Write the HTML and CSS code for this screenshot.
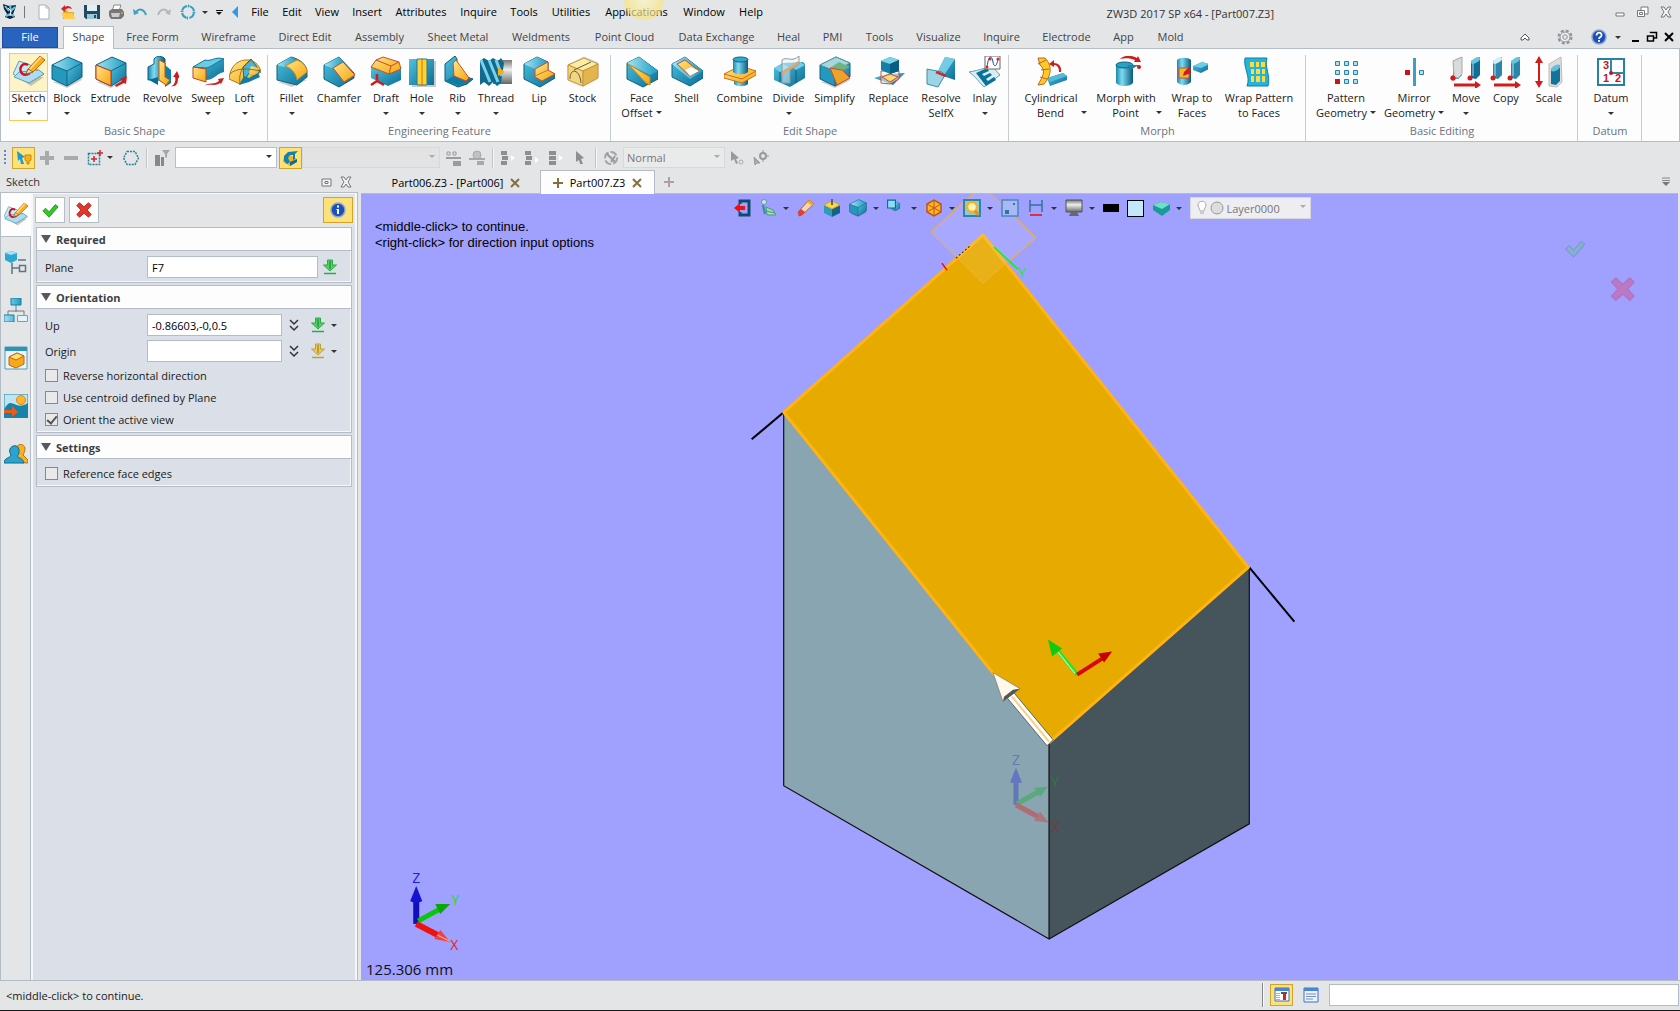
FILE: index.html
```html
<!DOCTYPE html>
<html lang="en">
<head>
<meta charset="utf-8">
<title>ZW3D 2017 SP x64 - [Part007.Z3]</title>
<link rel="stylesheet" href="styles.css">
</head>
<body>
<svg class="defs" aria-hidden="true">
  <defs>
    <linearGradient id="gb" x1="0" y1="0" x2="1" y2="1"><stop offset="0" stop-color="#4fc3e0"/><stop offset="1" stop-color="#0b6c94"/></linearGradient>
    <linearGradient id="gc" x1="0" y1="0" x2="1" y2="0"><stop offset="0" stop-color="#1a86ab"/><stop offset=".35" stop-color="#7fdcf0"/><stop offset="1" stop-color="#075a80"/></linearGradient>
    <linearGradient id="gt" x1="0" y1="0" x2="1" y2="0"><stop offset="0" stop-color="#a6e3f2"/><stop offset="1" stop-color="#1d9cc2"/></linearGradient>
    <linearGradient id="gy" x1="0" y1="0" x2="1" y2="1"><stop offset="0" stop-color="#ffe58a"/><stop offset="1" stop-color="#f5a50a"/></linearGradient>
    <linearGradient id="gg" x1="0" y1="0" x2="0" y2="1"><stop offset="0" stop-color="#777"/><stop offset=".4" stop-color="#eee"/><stop offset="1" stop-color="#666"/></linearGradient>
  </defs>
  <symbol id="box" viewBox="0 0 32 32"><path d="M2 26l14 6 15-8-2-3z" fill="#0003"/><path d="M1 9L17 1l14 6-15 8z" fill="url(#gt)"/><path d="M1 9l15 6v15L1 23z" fill="#2499bd"/><path d="M16 15l15-8v14l-15 9z" fill="url(#gb)"/><path d="M1 9l15 6 15-8M16 15v15M1 9L17 1l14 6v14l-15 9-15-7z" fill="none" stroke="#0b6283"/></symbol>
  <symbol id="sketch" viewBox="0 0 32 32"><path d="M4 21l14 9 13-9z" fill="#0003"/><path d="M0 18L6 5l11 4 14 9-15 9z" fill="#cdeaf6" stroke="#5c9fbc"/><path d="M1 21l5-5 20-2 5 4-15 9z" fill="#aedbef" stroke="#5c9fbc"/><path d="M15 9c-5-3-9 2-7 7 2 4 6 3 9 1" fill="none" stroke="#c91522" stroke-width="2.500"/><path d="M13 18l2-5L27 0l5 4-12 12z" fill="#f9ad1c" stroke="#c46f08"/><path d="M17 13L28 1" stroke="#ffe08a" stroke-width="1.500"/><path d="M13 18l2-5 5 3z" fill="#f4d7a6" stroke="#555" stroke-width=".7"/></symbol>
  <symbol id="dn" viewBox="0 0 16 16"><path d="M5.500 1h5v5h4L8 12 1.500 6h4z" stroke-width="1"/><path d="M8 2v8" stroke-width="2"/><path d="M2 14.500h12" stroke-width="1.500"/></symbol>
  <symbol id="tick" viewBox="0 0 20 20"><path d="M2 11l3-3 4 4 7-8 3 2.500L9 18z"/></symbol>
  <symbol id="cross" viewBox="0 0 20 20"><path d="M2 5l3-3 5 4.500L15 2l3 3-4.500 5 4.500 5-3 3-5-4.500L5 18l-3-3 4.500-5z"/></symbol>
  <symbol id="chev" viewBox="0 0 12 14"><path d="M2 2l4 4 4-4M2 8l4 4 4-4" fill="none" stroke="#333" stroke-width="1.500"/></symbol>
  <symbol id="x" viewBox="0 0 12 12"><path d="M2 2l8 8M10 2l-8 8" fill="none" stroke="#84703f" stroke-width="2"/></symbol>
  <symbol id="xo" viewBox="0 0 12 12"><path d="M1 1h3l2 3 2-3h3L8 6l3 5H8L6 8l-2 3H1l3-5z" fill="#f4f4f4" stroke="#777"/></symbol>
  <symbol id="move" viewBox="0 0 32 32"><path d="M3 5l9-4v18l-4 4-5-1zM21 5l9-4v18l-4 4-5-1z"/><path d="M5 7v13M23 7v13" stroke="#fff" stroke-opacity=".35" stroke-width="2"/><ellipse cx="7.500" cy="4.500" rx="5" ry="2.400" transform="rotate(-30 7.500 4.500)" fill="#cfeef7"/><ellipse cx="25.500" cy="4.500" rx="5" ry="2.400" transform="rotate(-30 25.500 4.500)" fill="#68c5df"/><circle cx="3" cy="22" r="2.500" fill="#d01c1c"/><circle cx="20" cy="22" r="2.500" fill="#d01c1c"/><path d="M4 27.500h21v-2.500l6 4-6 4v-2.500H4z" fill="#d01c1c"/></symbol>
</svg>

<div class="app">
  <header class="titlebar">
    <div class="quick">
      <svg class="logo" viewBox="0 0 16 18"><path d="M1 1l6 2 7-1-1 4-2 5 2 3-5 2-5-2 2-3-3-5z" fill="#123"/><path d="M3 3l4 5M8 2l1 6 4-4M4 13l4-2 4 2" stroke="#69c6e8" stroke-width="2" fill="none"/><path d="M6 5l3 3-1 5" stroke="#fff" fill="none"/></svg>
      <i class="vsep"></i>
      <button aria-label="New"><svg viewBox="0 0 16 16"><path d="M3 1h7l3 3v11H3z" fill="#fff" stroke="#a9b0b8"/><path d="M10 1v3h3" fill="none" stroke="#a9b0b8"/></svg></button>
      <button aria-label="Open"><svg viewBox="0 0 16 16"><path d="M3 6h4l1 2h6v7H3z" fill="#f6a61a"/><path d="M1 9h12l2 6H4z" fill="#ffcc4d"/><path d="M12 5C11 2 7 1 5 3V1L1 5l4 3V6c2-2 4-2 7-1z" fill="#d3222a"/></svg></button>
      <button aria-label="Save"><svg viewBox="0 0 16 16"><path d="M0 1h16v14H2l-2-2z" fill="#254a5f"/><path d="M3 1h10v6H3z" fill="#dff1f8"/><path d="M3 10h10v5H3z" fill="#9dc6d8"/><path d="M10 11h2v3h-2z" fill="#254a5f"/></svg></button>
      <button aria-label="Print"><svg viewBox="0 0 16 16"><path d="M6 1h7l-2 6H4z" fill="#fff" stroke="#888"/><path d="M1 7l3-2h10l2 3v4l-3 3H3l-2-3z" fill="#777"/><path d="M3 9h9l-1 4H4z" fill="#ccc"/><circle cx="14" cy="9" r="1" fill="#d8a322"/></svg></button>
      <button aria-label="Undo"><svg viewBox="0 0 16 16"><path d="M4 8c3-4 8-3 10 3" fill="none" stroke="#3fa0bf" stroke-width="2"/><path d="M1 5l1 6 5-2z" fill="#3fa0bf"/></svg></button>
      <button aria-label="Redo"><svg viewBox="0 0 16 16"><path d="M12 8c-3-4-8-3-10 3" fill="none" stroke="#b3b8bd" stroke-width="2"/><path d="M15 5l-1 6-5-2z" fill="#b3b8bd"/></svg></button>
      <button aria-label="Regenerate"><svg viewBox="0 0 16 16"><circle cx="8" cy="8" r="6" fill="none" stroke="#3d9fc0" stroke-width="2" stroke-dasharray="6.400 3" stroke-dashoffset="-1.500"/><path d="M8 0l2 2-2 2zM16 8l-2 2-2-2zM8 16l-2-2 2-2zM0 8l2-2 2 2z" fill="#3d9fc0"/></svg></button>
      <i class="dd"></i><button class="more" aria-label="Customize"><i class="bar"></i><i class="dd"></i></button>
      <i class="left"></i>
    </div>
    <nav class="menu">
      <a href="#">File</a><a href="#">Edit</a><a href="#">View</a><a href="#">Insert</a><a href="#">Attributes</a><a href="#">Inquire</a><a href="#">Tools</a><a href="#">Utilities</a><a href="#" class="spot">Applications</a><a href="#">Window</a><a href="#">Help</a>
    </nav>
    <h1>ZW3D 2017 SP x64 - [Part007.Z3]</h1>
    <div class="wbtns">
      <button aria-label="Minimize"><svg viewBox="0 0 12 12"><path d="M2 7h8v3H2z" fill="#fff" stroke="#777"/></svg></button>
      <button aria-label="Restore"><svg viewBox="0 0 12 12"><path d="M4 1h7v7H4z" fill="#fff" stroke="#777"/><path d="M.500 4.500h7v6h-7zM2.500 6.500h3v2h-3z" fill="#fff" stroke="#777"/></svg></button>
      <button aria-label="Close"><svg viewBox="0 0 12 12"><use href="#xo"/></svg></button>
    </div>
  </header>

  <div class="tabrow">
    <nav class="tabs">
      <a href="#" class="file">File</a><a href="#" class="on">Shape</a><a href="#">Free Form</a><a href="#">Wireframe</a><a href="#">Direct Edit</a><a href="#">Assembly</a><a href="#">Sheet Metal</a><a href="#">Weldments</a><a href="#">Point Cloud</a><a href="#">Data Exchange</a><a href="#">Heal</a><a href="#">PMI</a><a href="#">Tools</a><a href="#">Visualize</a><a href="#">Inquire</a><a href="#">Electrode</a><a href="#">App</a><a href="#">Mold</a>
    </nav>
    <div class="tools">
      <button class="fold" aria-label="Collapse ribbon"><svg viewBox="0 0 12 12"><path d="M2 7l4-4 4 4v2H8L6 7 4 9H2z" fill="#fff" stroke="#555"/></svg></button>
      <button class="gearb" aria-label="Options"><svg viewBox="0 0 16 16"><circle cx="8" cy="8" r="6.500" fill="none" stroke="#8e9296" stroke-width="2" stroke-dasharray="3 2.100"/><circle cx="8" cy="8" r="5" fill="#eee" stroke="#8e9296"/><circle cx="8" cy="8" r="2.300" fill="#e3e5e7" stroke="#8e9296"/></svg></button>
      <button aria-label="Help"><svg viewBox="0 0 16 16"><circle cx="8" cy="8" r="7" fill="#1c50b8" stroke="#8fa6cf" stroke-width="1.500"/><path d="M5.500 6.500c0-4 5.500-3.500 5 0-.3 1.500-2.500 1.500-2.500 3.500M8 11v2" stroke="#fff" stroke-width="1.800" fill="none"/></svg></button>
      <i class="dd"></i>
      <button class="sm" aria-label="Minimize document"><svg viewBox="0 0 12 12"><path d="M3 9h7v2H3z"/></svg></button>
      <button class="sm" aria-label="Restore document"><svg viewBox="0 0 12 12"><path d="M4.500 2v-.500h6V7H8M1.500 5h6v5h-6z" fill="none" stroke="#000" stroke-width="1.500"/></svg></button>
      <button class="sm" aria-label="Close document"><svg viewBox="0 0 12 12"><path d="M2 2l8 8M10 2l-8 8" stroke="#000" stroke-width="2"/></svg></button>
    </div>
  </div>

  <div class="ribbon">
    <section class="grp basic"><div class="items">
      <button class="cmd hot"><svg viewBox="0 0 32 32"><use href="#sketch"/></svg><span>Sketch</span><i class="dd"></i></button>
      <button class="cmd"><svg viewBox="0 0 32 32"><use href="#box"/></svg><span>Block</span><i class="dd"></i></button>
      <button class="cmd"><svg viewBox="0 0 32 32"><use href="#box"/><path d="M1 9l15 6v15L1 23z" fill="url(#gy)" stroke="#c6392b"/><path d="M20 29l7-4-2-2 7-3-1 8-2-1-8 4z" fill="#d01c1c"/></svg><span>Extrude</span></button>
      <button class="cmd"><svg viewBox="0 0 32 32"><path d="M1 11l6-3V3c3-4 9-3 11 0v24l-9-4-8 1z" fill="url(#gc)" stroke="#0a6487"/><path d="M18 9l6 5v13l-6 4z" fill="#147da5"/><path d="M12 4l6 3v14l5 3-4 5-7-5z" fill="url(#gy)" stroke="#c05a18"/><path d="M2 24l9-3v8z" fill="#0a6d94"/><path d="M24 30c4-1 5-6 4-9h-2l4-6 3 7h-2c0 6-2 9-7 8z" fill="#d01c1c"/></svg><span>Revolve</span></button>
      <button class="cmd"><svg viewBox="0 0 32 32"><path d="M1 11l12-7c6 2 10-4 19-1v13c-7 1-10 8-18 8z" fill="url(#gb)"/><path d="M1 11l12-7c6 2 10-4 19-1-8 3-12 8-18 9z" fill="#6bcbe3" stroke="#11779b"/><path d="M1 11l13 2v13L1 22z" fill="url(#gy)" stroke="#b94725"/><path d="M12 30c5-4 10-1 15-5l-1-2 6-1-3 6-1-1c-5 4-10 0-16 3z" fill="#d01c1c"/></svg><span>Sweep</span><i class="dd"></i></button>
      <button class="cmd"><svg viewBox="0 0 32 32"><path d="M0 23C1 10 9 3 20 4c7 1 11 7 12 12l-12 8-9 4z" fill="url(#gy)" stroke="#b87613"/><path d="M14 11l8-8 9 12-5 6-6-4-5 8z" fill="#4ab5d2" stroke="#126f91"/><path d="M20 18l2-8 8 2-2 9z" fill="url(#gy)"/><path d="M15 20l5 2 9-5 2 4-11 5-10 3z" fill="#157ba2"/><path d="M11 28C9 12 18 8 22 4M1 18c6-6 17-6 30-3" fill="none" stroke="#805b18" stroke-width=".8"/></svg><span>Loft</span><i class="dd"></i></button>
    </div><h2>Basic Shape</h2></section>

    <section class="grp eng"><div class="items">
      <button class="cmd"><svg viewBox="0 0 32 32"><path d="M2 26l14 5 15-7z" fill="#0003"/><path d="M1 9L15 1c9 2 16 8 16 15v5l-10 8L1 24z" fill="url(#gb)" stroke="#0b6283"/><path d="M1 9L15 1l6 3-13 7z" fill="url(#gt)"/><path d="M9 10l12-6c6 2 10 7 10 12l-10 8C20 17 15 12 9 10z" fill="url(#gy)" stroke="#c78a18"/></svg><span>Fillet</span><i class="dd"></i></button>
      <button class="cmd"><svg viewBox="0 0 32 32"><path d="M1 9l15-8 15 16v5l-15 9-15-8z" fill="url(#gb)" stroke="#0b6283"/><path d="M1 9l15-8 5 5-12 6z" fill="url(#gt)"/><path d="M10 12l10-6 12 13-11 7z" fill="url(#gy)" stroke="#c74c2a"/></svg><span>Chamfer</span></button>
      <button class="cmd"><svg viewBox="0 0 32 32"><path d="M1 11l15 5 15-5v13l-13 6-17-8z" fill="url(#gb)"/><path d="M6 4l7-3 16 5 2 7-12 5L1 11z" fill="url(#gy)" stroke="#c74c2a"/><path d="M6 4l15 6 8-4M21 10l-2 8" fill="none" stroke="#c74c2a"/><path d="M7 18v7l-6 4M7 25l7 4" stroke="#d01c1c" stroke-width="2.500" fill="none"/></svg><span>Draft</span><i class="dd"></i></button>
      <button class="cmd"><svg viewBox="0 0 32 32"><path d="M4 5h26v26H6z" fill="#0003"/><path d="M3 3h25v26H3z" fill="url(#gb)"/><path d="M11 3h10v26H11z" fill="#ffd22e" stroke="#27799a"/><path d="M16 2v28" stroke="#c87714"/></svg><span>Hole</span><i class="dd"></i></button>
      <button class="cmd"><svg viewBox="0 0 32 32"><path d="M3 8l10-8 2 3v15l16 5-6 5-9 3L3 25z" fill="url(#gb)" stroke="#0a5c7e"/><path d="M3 25l12-7 16 5-14 6z" fill="#0e7ba2"/><path d="M11 7l3-3 13 18-3 3-12-5z" fill="url(#gy)" stroke="#c74c2a"/></svg><span>Rib</span><i class="dd"></i></button>
      <button class="cmd"><svg viewBox="0 0 32 32"><path d="M13 4h19v24H13z" fill="url(#gg)"/><path d="M0 5l4-3 5 3 4-3 5 3 3-3 3 5-3 20-4 3-4-4-4 4-5-4-4 3z" fill="#11698f"/><path d="M1 4l9 22M9 4l9 22M16 4l6 16" stroke="#78d1ea" stroke-width="3"/><path d="M18 11l7 5-7 4z" fill="#f9ae18"/></svg><span>Thread</span><i class="dd"></i></button>
      <button class="cmd"><svg viewBox="0 0 32 32"><path d="M1 8l13-7 11 5v9l7 3v4l-15 9-16-8z" fill="url(#gb)" stroke="#095d80"/><path d="M1 8l13-7 11 5-13 7z" fill="url(#gt)"/><path d="M12 13l13-7v8l7 4-13 7-7-4z" fill="url(#gy)" stroke="#d14e25"/><path d="M12 20l13-6" stroke="#c77a17"/></svg><span>Lip</span></button>
      <button class="cmd"><svg viewBox="0 0 32 32"><use href="#box" opacity=".25"/><path d="M1 9l16-7 14 6-15 7z" fill="#ffeca0" stroke="#c4963f"/><path d="M1 9l15 6v15L1 24z" fill="#f3d67c" stroke="#c4963f"/><path d="M16 15l15-7v14l-15 8z" fill="#e3b54e" stroke="#c4963f"/><path d="M3 23c0-12 10-10 11 4M7 14L24 6" fill="none" stroke="#5c5a49"/></svg><span>Stock</span></button>
    </div><h2>Engineering Feature</h2></section>

    <section class="grp edit"><div class="items">
      <button class="cmd"><svg viewBox="0 0 32 32"><path d="M1 7l12-6 19 14v8l-15 8-16-8z" fill="url(#gb)" stroke="#0b6283"/><path d="M1 7l12-6 19 14-8 4z" fill="url(#gt)"/><path d="M2 8l22 13v8l-4-2z" fill="url(#gy)" stroke="#c98a1a"/></svg><span>Face</span><span class="row">Offset<i class="dd"></i></span></button>
      <button class="cmd"><svg viewBox="0 0 32 32"><path d="M1 8l13-7 18 14v7l-13 8-18-9z" fill="url(#gb)" stroke="#0b6283"/><path d="M1 8l13-7 18 14-13 8z" fill="url(#gt)"/><path d="M6 8l8-4 14 11-9 5z" fill="url(#gy)" stroke="#c74c2a"/><path d="M14 14l6-3 8 4-9 5z" fill="#fff"/></svg><span>Shell</span></button>
      <button class="cmd"><svg viewBox="0 0 32 32"><path d="M10 24h14v4c-3 3-11 3-14 0z" fill="url(#gc)"/><path d="M0 18l16-8 16 5v4l-14 8-18-5z" fill="url(#gy)" stroke="#d06a1e"/><path d="M0 18l18 5 14-8" fill="none" stroke="#d06a1e"/><path d="M9 3h15v13c-3 3-12 3-15 0z" fill="url(#gc)"/><ellipse cx="16.500" cy="3.500" rx="7.500" ry="2.500" fill="#31a7c9" stroke="#0b6283"/></svg><span>Combine</span></button>
      <button class="cmd"><svg viewBox="0 0 32 32"><path d="M1 12l9-5 20-1 2 2v14l-15 9-16-7z" fill="url(#gb)"/><path d="M1 12l9-4 6 3-9 5zM19 11l8-5 5 3-9 5z" fill="#74cfe6"/><path d="M7 16v10M23 14v13" stroke="#0a5c7e"/><path d="M9 4c5-4 10 3 17-4v8l-9 6v13H9z" fill="#eaf1f4" fill-opacity=".5" stroke="#8a9aa2"/><path d="M9 18c5-6 10-5 16-12" stroke="#f1a05a" stroke-width="2" fill="none"/></svg><span>Divide</span><i class="dd"></i></button>
      <button class="cmd"><svg viewBox="0 0 32 32"><use href="#box"/><path d="M1 9L17 1l14 6-15 8z" fill="#a5d7df" stroke="#5a97a8"/><path d="M11 12l9-6 11 5-9 4z" fill="#6eb384"/><path d="M11 12l12 2 8 8-13 7z" fill="#eaa42b" stroke="#d5472a"/></svg><span>Simplify</span></button>
      <button class="cmd"><svg viewBox="0 0 32 32"><path d="M1 22l13-4 18-1-12 12z" fill="url(#gb)"/><path d="M8 27V15h18v8l-9 5z" fill="#fff" fill-opacity=".5" stroke="#d34a31"/><path d="M9 21l8-3 8 3-8 5z" fill="#ffda72" stroke="#d34a31"/><path d="M8 5l9-4 9 3v11l-9 3-9-4z" fill="#157fa6"/><path d="M8 5l9-4 9 3-9 4z" fill="#7ed3e7"/><path d="M17 8l9-4v11l-9 3z" fill="#075d83"/></svg><span>Replace</span></button>
      <button class="cmd"><svg viewBox="0 0 32 32"><path d="M12 17L20 1l10 2v21l-9-3z" fill="url(#gb)"/><path d="M12 17L20 1l10 2-11 16z" fill="#74cbe3"/><path d="M2 13l15 3 3 3-7 12-11-3z" fill="#9ad5e6" stroke="#3c8eab"/><path d="M11 16l10 4" stroke="#cf2c26" stroke-width="2.500"/></svg><span>Resolve</span><span>SelfX</span></button>
      <button class="cmd"><svg viewBox="0 0 32 32"><path d="M0 16c11-2 16-4 23-6l8 9-16 12c-5-5-8-10-15-15z" fill="#d8edf4" stroke="#679dad"/><path d="M7 17l11-5 2 3-7 3 2 2 6-3 2 2-6 4 2 2 6-4 2 3-10 6z" fill="#08739a"/><path d="M16 0h15v13H16z" fill="#fff" stroke="#666"/><path d="M18 11c2-14 5-11 6-5s4 5 5-4" fill="none" stroke="#1b4998"/><circle cx="18" cy="11" r="1.500" fill="#d22"/><circle cx="21" cy="3" r="1.500" fill="#d22"/><circle cx="29" cy="3" r="1.500" fill="#d22"/></svg><span>Inlay</span><i class="dd"></i></button>
    </div><h2>Edit Shape</h2></section>

    <section class="grp morph"><div class="items">
      <button class="cmd"><svg viewBox="0 0 32 32"><path d="M12 22l16-5 4 3v4l-17 6z" fill="url(#gb)"/><path d="M12 22l16-5 4 3-17 6z" fill="#54bbd8"/><path d="M3 2h7c8 8 6 18-1 26l-6 1c4-8 9-14 2-20z" fill="#ffca27" stroke="#b9661b"/><path d="M3 8l8-4M6 14l8-1M5 21l7 2" stroke="#b9661b"/><path d="M26 16c1-6-3-9-7-9V4l-5 4 5 3V9c3 0 5 2 5 7z" fill="#d01c1c"/></svg><span>Cylindrical</span><span class="row">Bend<i class="dd far"></i></span></button>
      <button class="cmd"><svg viewBox="0 0 32 32"><path d="M6 9h17v18c-3 4-14 4-17 0z" fill="url(#gc)"/><ellipse cx="14.500" cy="9" rx="8.500" ry="3" fill="#29a0c4" stroke="#0b6283"/><path d="M17 9l12 0-9 5z" fill="#26809e"/><circle cx="29" cy="11" r="2" fill="#d01c1c"/><path d="M10 3C14-1 22-1 27 2l1-2 3 6-7 0 1-2c-5-2-10-2-15-1z" fill="#d01c1c"/></svg><span>Morph with</span><span class="row">Point<i class="dd far"></i></span></button>
      <button class="cmd"><svg viewBox="0 0 32 32"><path d="M1 4c3-3 11-3 14 0v22c-3 4-11 4-14 0z" fill="url(#gc)"/><path d="M3 12h10v10H3z" fill="#f6b72c" stroke="#d34a31"/><path d="M14 10l-6 6-1 4 8-3z" fill="#d01c1c"/><path d="M17 10l9-4 7 2v5l-8 4-8-3z" fill="url(#gb)"/><path d="M17 10l9-4 7 2-8 4z" fill="#6ecce4"/></svg><span>Wrap to</span><span>Faces</span></button>
      <button class="cmd"><svg viewBox="0 0 32 32"><path d="M2 2h22c-3 8 4 18 1 28H4C8 20 0 12 2 2z" fill="#23b5dc" stroke="#0e7ea3"/><path d="M7 6h4v5H7zM13 6h3v5h-3zM18 6h4v5h-4zM8 13h3v5H8zM13 13h4v5h-4zM19 13h3v5h-3zM8 20h3v6H8zM13 20h4v6h-4zM19 20h3v6h-3z" fill="#ffdb3b"/></svg><span>Wrap Pattern</span><span>to Faces</span></button>
    </div><h2>Morph</h2></section>

    <section class="grp bedit"><div class="items">
      <button class="cmd"><svg viewBox="0 0 32 32"><g fill="#a7e2f4" stroke="#2a83a3"><path d="M5.500 5.500h4v4h-4zM14.500 5.500h4v4h-4zM23.500 5.500h4v4h-4zM5.500 14.500h4v4h-4zM14.500 14.500h4v4h-4zM23.500 14.500h4v4h-4zM14.500 23.500h4v4h-4zM23.500 23.500h4v4h-4z"/></g><path d="M5 23h5v5H5z" fill="#c9141b"/></svg><span>Pattern</span><span class="row">Geometry<i class="dd"></i></span></button>
      <button class="cmd"><svg viewBox="0 0 32 32"><path d="M15 2h3v28h-3z" fill="#3f9fc2"/><path d="M7 14h5v5H7z" fill="#c9141b"/><path d="M21.500 14.500h4v4h-4z" fill="#a7e2f4" stroke="#2a83a3"/></svg><span>Mirror</span><span class="row">Geometry<i class="dd"></i></span></button>
      <button class="cmd"><svg viewBox="0 0 32 32"><use href="#move" fill="#116e96"/><path d="M3 5l9-4v17l-4 4-4-1z" fill="#d9dadb" stroke="#aaa"/><circle cx="3" cy="22" r="2.500" fill="#d01c1c"/></svg><span>Move</span><i class="dd"></i></button>
      <button class="cmd"><svg viewBox="0 0 32 32"><use href="#move" fill="#2a86aa"/></svg><span>Copy</span></button>
      <button class="cmd"><svg viewBox="0 0 32 32"><path d="M6 0l4 7H7v18h3l-4 7-4-7h3V7H2z" fill="#d01c1c"/><path d="M16 8l12-7 1 25-5 5-8-1z" fill="#ddd" stroke="#bbb"/><path d="M18 14l9-5v16l-4 4-5-1z" fill="#14739b"/><ellipse cx="22.500" cy="12" rx="5" ry="2.500" transform="rotate(-30 22.500 12)" fill="#5fc0dc"/></svg><span>Scale</span></button>
    </div><h2>Basic Editing</h2></section>

    <section class="grp datum"><div class="items">
      <button class="cmd"><svg viewBox="0 0 32 32"><path d="M3 3h26v26H3z" fill="#fff" stroke="#27829f" stroke-width="2"/><path d="M16 3v14h13" fill="none" stroke="#2b8ba9" stroke-width="2"/><circle cx="16" cy="17" r="2" fill="#c9141b"/><text x="8" y="13" class="dn">3</text><text x="8" y="26" class="dn">1</text><text x="20" y="26" class="dn">2</text></svg><span>Datum</span><i class="dd"></i></button>
    </div><h2>Datum</h2></section>
  </div>

  <div class="optbar">
    <i class="grip"></i>
    <button class="tb on" aria-label="Pick"><svg viewBox="0 0 16 16"><path d="M1 1l8 6-3 1 2 6-3 0-1-5-2 2z" fill="#1c9bd0"/><path d="M9 5h6v5l-2 1v3h-2v-3l-2-1z" fill="#f8b01c" stroke="#c98514"/></svg></button>
    <button class="tb" aria-label="Add"><svg viewBox="0 0 16 16"><path d="M6 1h4v5h5v4h-5v5H6v-5H1V6h5z" fill="#a8abae"/></svg></button>
    <button class="tb" aria-label="Remove"><svg viewBox="0 0 16 16"><path d="M1 6h14v4H1z" fill="#a8abae"/></svg></button>
    <button class="tb" aria-label="Window pick"><svg viewBox="0 0 16 16"><path d="M1.500 3.500h11v11h-11z" fill="none" stroke="#25809f" stroke-width="1.500" stroke-dasharray="2 1"/><path d="M7 6v6M4 9h6M13 0v6M10 3h6" stroke="#d2262c" stroke-width="1.500"/></svg></button>
    <i class="dd"></i>
    <button class="tb hex" aria-label="Polygon pick"><svg viewBox="0 0 16 16"><path d="M4 1.500h8L15.500 8 12 14.500H4L.500 8z" fill="none" stroke="#25809f" stroke-width="1.500" stroke-dasharray="2 1"/></svg></button>
    <i class="sep"></i>
    <button class="tb" aria-label="Filter"><svg viewBox="0 0 16 16"><path d="M1 5h5v11H1zM7 7h3v9H7z" fill="#888"/><path d="M8 0h8l-3 4v4l-2-1V4z" fill="#a6a6a6"/></svg></button>
    <span class="sel white"><select aria-label="Filter type"><option></option></select></span>
    <button class="tb on" aria-label="Active part"><svg viewBox="0 0 16 16"><path d="M0 9l7-4 7 4v3l-7 4-7-4z" fill="#f8b01c"/><path d="M1 6l4-4 10-1-3 3v5l-2 1V5H7l-2 3 2 4-3 2-3-3z" fill="#1481ac"/><path d="M7 12l7-3v3l-7 4z" fill="#0f6b93"/></svg></button>
    <span class="sel wide"><select aria-label="Pick scope" disabled><option></option></select></span>
    <div class="greys">
      <svg viewBox="0 0 16 16"><path d="M1 7h15v2H1zM8 11h8v5H8z" fill="#9a9da0"/><path d="M2 2h3v3H2zM8 2h3v3H8z" fill="none" stroke="#9a9da0"/></svg>
      <svg viewBox="0 0 16 16"><circle cx="8" cy="5" r="4" fill="#c0c0c0" stroke="#aaa"/><path d="M0 8h16v2H0zM8 11h7v4H8z" fill="#a6a8aa"/></svg>
    </div>
    <i class="sep"></i>
    <div class="greys">
      <svg viewBox="0 0 16 16"><path d="M1 1h6v4H1zM2 6h6v4H2zM1 11h6v4H1z" fill="#8d9093"/><path d="M11 5l4 3-4 3z" fill="#fff"/></svg>
      <svg viewBox="0 0 16 16"><path d="M1 1h6v4H1zM2 6h6v4H2zM1 11h6v4H1z" fill="#8d9093"/><path d="M11 7l4 3-4 3z" fill="#fff"/></svg>
      <svg viewBox="0 0 16 16"><path d="M1 1h7v4H1zM1 6h7v4H1zM1 11h7v4H1z" fill="#8d9093"/><path d="M11 5l4 3-4 3z" fill="#fff"/></svg>
      <svg viewBox="0 0 16 16"><path d="M4 1l8 7-3 1 2 5-3 0-1-4-3 2z" fill="#8d9093"/></svg>
    </div>
    <i class="sep"></i>
    <div class="greys">
      <svg viewBox="0 0 16 16"><circle cx="8" cy="8" r="6" fill="none" stroke="#a5a5a5" stroke-width="2" stroke-dasharray="7 2"/><path d="M4 4l8 8M12 6l-4 6" stroke="#999" stroke-width="2"/></svg>
    </div>
    <span class="sel norm"><select aria-label="Mode" disabled><option>Normal</option></select></span>
    <div class="greys">
      <svg viewBox="0 0 16 16"><path d="M2 1l8 7-3 1 2 4-2 1-2-5-3 2z" fill="#999"/><circle cx="12" cy="12" r="2" fill="none" stroke="#aaa"/></svg>
      <svg viewBox="0 0 16 16"><circle cx="10" cy="6" r="3" fill="none" stroke="#999" stroke-width="2"/><path d="M1 7l6 6-3 0-2 2zM10 0v2M16 6h-2M10 12v-2" stroke="#999" fill="#aaa"/></svg>
    </div>
  </div>

  <div class="work">
    <aside class="side">
      <div class="shead"><span>Sketch</span>
        <button aria-label="Dock"><svg viewBox="0 0 12 12"><path d="M2 3h9v7H2zM5 5.500h3v2H5z" fill="#f4f4f4" stroke="#777"/></svg></button>
        <button aria-label="Close panel"><svg viewBox="0 0 12 12"><use href="#xo"/></svg></button>
      </div>
      <div class="sbody">
        <div class="rail">
          <button class="on" aria-label="Sketch"><svg viewBox="0 0 32 32"><use href="#sketch"/></svg></button>
          <button aria-label="Manager"><svg viewBox="0 0 24 24"><path d="M1 3l7-2 5 2v7l-6 3-6-3z" fill="#2ba7d2"/><path d="M1 3l7-2 5 2-6 2z" fill="#a5e2f3"/><path d="M14 10h8M8 13v11M8 18h7M15.500 15.500h6v6h-6z" fill="none" stroke="#557987" stroke-width="1.500"/></svg></button>
          <button aria-label="Assembly tree"><svg viewBox="0 0 24 24"><path d="M12 7v7M4 18v-5h16v5" fill="none" stroke="#6a7c86"/><path d="M7 0h10v7H7zM0 17h10v7H0z" fill="url(#gt)" stroke="#1b7fa1"/><path d="M13.500 17.500h10v6h-10z" fill="#dff3f9" stroke="#68a6bb"/></svg></button>
          <button aria-label="View manager"><svg viewBox="0 0 24 24"><path d="M1 1h22v22H1z" fill="#e9f5fa" stroke="#4d9fbb"/><path d="M1 1h22v4H1z" fill="#2f93b6"/><path d="M5 11l8-4 7 3v8l-8 4-7-3z" fill="#f7a91a" stroke="#c8611a"/><path d="M5 11l8-4 7 3-8 4z" fill="#ffe36a" stroke="#c8611a"/></svg></button>
          <button aria-label="Visual manager"><svg viewBox="0 0 24 24"><path d="M0 0h24v24H0z" fill="#bfe5f2" stroke="#1b86a8"/><path d="M0 16c8-16 10 2 24-7v15H0z" fill="#1683ab"/><circle cx="17" cy="6" r="4.500" fill="#ffb429" stroke="#d98a1a"/><path d="M0 16h8v-4l6 6-6 5v-4H0z" fill="#ee5a1e"/></svg></button>
          <button aria-label="Roles"><svg viewBox="0 0 24 24"><path d="M9 20l3-8C9 3 19-1 21 6c0 3-1 5-2 7l5 5v3z" fill="#f6b024" stroke="#b97416"/><path d="M0 21c0-5 6-5 7-8-6-9 9-14 8-3 0 3-1 3-2 4 1 2 6 2 7 7z" fill="#2ba3cd" stroke="#136a8a"/></svg></button>
        </div>
        <form class="panel">
          <div class="acts">
            <button type="button" aria-label="OK"><svg viewBox="0 0 20 20" fill="#35c628" stroke="#1c9a18"><use href="#tick"/></svg></button>
            <button type="button" aria-label="Cancel"><svg viewBox="0 0 20 20" fill="#e2362c" stroke="#b3231c"><use href="#cross"/></svg></button>
            <button type="button" class="info" aria-label="Information"><svg viewBox="0 0 16 16"><circle cx="8" cy="8" r="7" fill="#1c50b8" stroke="#8fa6cf" stroke-width="1.500"/><path d="M7 3.500h2v2H7zM6.500 7H9v5H7V8h-.500z" fill="#fff"/></svg></button>
          </div>
          <section class="box"><h3><i></i>Required</h3>
            <div class="fields">
              <div class="f plane"><label for="pl">Plane</label><input id="pl" type="text" value="F7"><svg class="p16 green" viewBox="0 0 16 16"><use href="#dn"/></svg></div>
            </div>
          </section>
          <section class="box"><h3><i></i>Orientation</h3>
            <div class="fields">
              <div class="f"><label for="up">Up</label><input id="up" type="text" value="-0.86603,-0,0.5"><svg class="chev" viewBox="0 0 12 14"><use href="#chev"/></svg><svg class="p16 green" viewBox="0 0 16 16"><use href="#dn"/></svg><i class="dd"></i></div>
              <div class="f"><label for="og">Origin</label><input id="og" type="text"><svg class="chev" viewBox="0 0 12 14"><use href="#chev"/></svg><svg class="p16 gold" viewBox="0 0 16 16"><use href="#dn"/></svg><i class="dd"></i></div>
              <label class="ck"><input type="checkbox">Reverse horizontal direction</label>
              <label class="ck"><input type="checkbox">Use centroid defined by Plane</label>
              <label class="ck"><input type="checkbox" checked>Orient the active view</label>
            </div>
          </section>
          <section class="box"><h3><i></i>Settings</h3>
            <div class="fields"><label class="ck"><input type="checkbox">Reference face edges</label></div>
          </section>
        </form>
      </div>
    </aside>

    <main class="main">
      <div class="docs">
        <a href="#" class="doc">Part006.Z3 - [Part006]<svg viewBox="0 0 12 12"><use href="#x"/></svg></a>
        <a href="#" class="doc on"><svg viewBox="0 0 12 12"><path d="M6 1v10M1 6h10" stroke="#84703f" stroke-width="2"/></svg>Part007.Z3<svg viewBox="0 0 12 12"><use href="#x"/></svg></a>
        <button class="add" aria-label="New tab"><svg viewBox="0 0 12 12"><path d="M6 1v10M1 6h10" stroke="#b09f9f" stroke-width="2"/></svg></button>
        <button class="list" aria-label="Tab list"><svg viewBox="0 0 12 12"><path d="M2 2h8M2 4.500h8" stroke="#888"/><path d="M2 6h8l-4 4z" fill="#777"/></svg></button>
      </div>
      <div class="view">
        <svg class="scene" viewBox="361 195 1317 785" preserveAspectRatio="xMidYMid slice">
          <path d="M784 413L1049 744V939L784 786z" fill="#89a5b1"/>
          <path d="M1049 744L1249 568V824L1049 939z" fill="#46545b"/>
          <path d="M784 413V786L1049 939V744M1049 939L1249 824V568" fill="none" stroke="#111" stroke-width="1.200"/>
          <path d="M752 440L784 413M1249 568L1294 622" stroke="#000" stroke-width="2"/>
          <path d="M983 236L1248 568L1049 743L784 413z" fill="#e6aa00" stroke="#ffb414" stroke-width="3" stroke-linejoin="round"/>
          <path d="M976 192L931 233L983 284L1036 239L988 192z" fill="#fff" fill-opacity=".09" stroke="#f5b02a"/>
          <path d="M994 248L1018 270" stroke="#0f0" stroke-width="1.500"/><path d="M956 259l14-12" stroke="#222" stroke-dasharray="2 2"/><path d="M942 264l5 7" stroke="#f00" stroke-width="1.500"/>
          <text x="1018" y="279" class="ax" fill="#1eea1e">Y</text>
          <g stroke-width="4"><path d="M1077 675L1056 649" stroke="#2ae42a"/><path d="M1075 674L1056 650" stroke="#bfffc0" stroke-width="1"/><path d="M1048 640l14 9-10 8z" fill="#0ecb0e"/><path d="M1077 675L1102 659" stroke="#d80808"/><path d="M1112 652l-14 2 6 9z" fill="#c80000"/></g>
          <path d="M1007 698L1013 692L1053 740L1047 746z" fill="#fff" stroke="#4a4a4a" stroke-width=".800"/><path d="M1012 697L1049 742" stroke="#f8ce85" stroke-width="2"/><path d="M993 673L1020 689L1003 702z" fill="#fff7e8" stroke="#777" stroke-width=".700"/><path d="M1020 689L1003 702L1004 697L1013 690z" fill="#555"/>
          <g opacity=".45"><path d="M1016 805V780" stroke="#3440c0" stroke-width="5"/><path d="M1016 768l6 15h-12z" fill="#3440d0"/><path d="M1017 804L1040 791" stroke="#20b040" stroke-width="5"/><path d="M1048 787l-14 1 6 9z" fill="#20b040"/><path d="M1016 805L1040 818" stroke="#e02828" stroke-width="5"/><path d="M1049 823l-15-2 6-9z" fill="#d04040"/><text x="1012" y="765" class="ax" fill="#3848c0">Z</text><text x="1051" y="787" class="ax" fill="#20a020">Y</text><text x="1051" y="832" class="ax" fill="#a02020">X</text></g>
          <g><path d="M417 924V899" stroke="#1010b8" stroke-width="6"/><path d="M417 886l6 15c-3 2-9 2-12 0z" fill="#1414d0"/><path d="M419 921L441 909" stroke="#08c808" stroke-width="5"/><path d="M451 904l-15 0 5 10z" fill="#07a807"/><path d="M417 924L440 936" stroke="#f01010" stroke-width="6"/><path d="M451 942l-16-3 6-9z" fill="#f04040"/><path d="M438 935l12 6" stroke="#ffb0a0"/><text x="413" y="883" class="ax" fill="#2020e0">Z</text><text x="452" y="905" class="ax" fill="#18e018">Y</text><text x="451" y="950" class="ax" fill="#f01818">X</text></g>
          <g stroke-width="1" opacity=".5"><svg x="1562" y="238" width="24" height="22" fill="#6fc3a5" stroke="#4d9a94"><use href="#tick"/></svg><svg x="1608" y="276" width="28" height="28" fill="#d8508c" stroke="#b8508c"><use href="#cross"/></svg></g>
        </svg>
        <div class="vbar">
          <svg viewBox="0 0 18 18"><path d="M7 5V2h9v14H7v-3" fill="none" stroke="#0f4a70" stroke-width="3"/><path d="M1 9l6-5v3h5v4H7v3z" fill="#f01010"/></svg>
          <button class="vd" aria-label="Lights"><svg viewBox="0 0 18 18"><circle cx="5" cy="3" r="2.500" fill="#cfe8e0" stroke="#69a"/><path d="M4 6l2 9" fill="none" stroke="#3d8fa5" stroke-width="2.500"/><path d="M7 8l7 3 3 5H8zM7 12l9 2" fill="#9fdcae" stroke="#4a9b80"/></svg><i class="dd"></i></button>
          <svg viewBox="0 0 18 18"><path d="M2 17l-1-4L12 1l5 4L5 16z" fill="#f3d9b0" stroke="#b5602c"/><path d="M2 17l-1-4 3-3 4 3-3 3z" fill="#e43b3b"/><path d="M12 1l5 4-2 2-5-4z" fill="#f6a820"/></svg>
          <svg viewBox="0 0 18 18"><path d="M1 6l8 4v8l-8-4z" fill="#2c9bbf"/><path d="M9 10l8-4v8l-8 4z" fill="#0f6488"/><path d="M1 6l8-4 8 4-8 4z" fill="#ffd83c" stroke="#c49a22" stroke-width=".700"/><path d="M9 0v6" stroke="#567" stroke-width="2"/></svg>
          <button class="vd" aria-label="Shading"><svg viewBox="0 0 32 32"><use href="#box"/></svg><i class="dd"></i></button>
          <button class="vd" aria-label="View box"><svg viewBox="0 0 32 32"><svg x="6" y="4" width="26" height="28"><use href="#box"/></svg><path d="M1 2h14v14H1z" fill="#8edcf0" stroke="#0e6d92" stroke-width="2"/></svg><i class="dd"></i></button>
          <button class="vd" aria-label="Standard views"><svg viewBox="0 0 18 18"><path d="M2 5l7-4 7 4v8l-7 4-7-4z" fill="#ffb52b" stroke="#c2560e" stroke-width="1.500"/><path d="M2 5l14 8M16 5L2 13M9 1v16" stroke="#c2560e"/></svg><i class="dd"></i></button>
          <button class="vd" aria-label="Zoom"><svg viewBox="0 0 18 18"><path d="M1 1h16v16H1z" fill="#8fc9e0" stroke="#2a86a8" stroke-width="2"/><circle cx="9" cy="8" r="5" fill="#fff2b8" stroke="#efb428" stroke-width="2.500"/><path d="M12 12l4 4" stroke="#e58e1a" stroke-width="3"/></svg><i class="dd"></i></button>
          <svg viewBox="0 0 18 18"><path d="M1 1h16v16H1z" fill="#a9b9f8" stroke="#4a86b8" stroke-width="1.500"/><path d="M4 11h4v4H4zM12 4h2v2h-2z" fill="#32749c"/></svg>
          <button class="vd" aria-label="Section"><svg viewBox="0 0 18 18"><path d="M3 1v12M15 1v12M3 6h12" fill="none" stroke="#2f7399" stroke-width="1.500"/><path d="M3 15h12v2H3z" fill="#d8304c"/></svg><i class="dd"></i></button>
          <button class="vd" aria-label="Background"><svg viewBox="0 0 18 18"><path d="M1 1h16v12H1z" fill="url(#gg)" stroke="#555"/><path d="M6 13h6l2 4H4z" fill="#667"/></svg><i class="dd"></i></button>
          <i class="sw black"></i><i class="sw sky"></i>
          <button class="vd" aria-label="Material"><svg viewBox="0 0 18 18"><path d="M1 6l8-3 9 2v6l-8 6-9-6z" fill="#1b9a9a"/><path d="M1 6l8-3 9 2-8 5z" fill="#6fe0c8"/></svg><i class="dd"></i></button>
          <span class="sel layer"><svg viewBox="0 0 28 16"><path d="M4 11c0-3-2-3-2-6 0-5 8-5 8 0 0 3-2 3-2 6zM4 13h4" fill="#fff" stroke="#aaa"/><circle cx="21" cy="8" r="6" fill="#ddd" stroke="#999"/></svg><select aria-label="Layer" disabled><option>Layer0000</option></select></span>
        </div>
        <p class="prompt">&lt;middle-click&gt; to continue.<br>&lt;right-click&gt; for direction input options</p>
        <p class="scale">125.306 mm</p>
      </div>
    </main>
  </div>

  <footer class="status">
    <span>&lt;middle-click&gt; to continue.</span>
    <i class="sep"></i>
    <button class="tb on" aria-label="Prompt"><svg viewBox="0 0 16 16"><path d="M1 1h14v13H1z" fill="#fff" stroke="#3d71c6"/><path d="M1 1h14v3H1z" fill="#4b85d8"/><path d="M3 6v7M5 6v7" stroke="#567" stroke-dasharray="1 1"/><path d="M7 5h6v2h-6z" fill="#555"/><path d="M9 7h3v6H9z" fill="#d3222a"/></svg></button>
    <button class="tb" aria-label="Output"><svg viewBox="0 0 16 16"><path d="M1 1h14v14H1z" fill="#eaf2fd" stroke="#3d71c6"/><path d="M1 1h14v3H1z" fill="#4b85d8"/><path d="M3 7h10M3 9.500h10M3 12h7" stroke="#7a92b8"/></svg></button>
    <input type="text" aria-label="Command">
  </footer>
</div>
</body>
</html>
```
FILE: styles.css
```css
* { box-sizing: border-box; }
body { margin: 0; font: 11px/15px "Open Sans", "Noto Sans", sans-serif; color: #1a1a1a; background: #e3e5e7; }
h1, h2, h3, p { margin: 0; font-size: 11px; font-weight: 400; }
a { color: inherit; text-decoration: none; }
button { border: 0; padding: 0; margin: 0; background: none; font: inherit; color: inherit; display: flex; align-items: center; justify-content: center; flex: none; }
svg { display: block; flex: none; }
i { flex: none; font-style: normal; }
.defs { position: absolute; width: 0; height: 0; }
.app { display: flex; flex-direction: column; min-height: 100vh; border-bottom: 1px solid #16181a; }
.dd { display: block; width: 0; height: 0; border: 3px solid transparent; border-top-color: #333; border-bottom: 0; }

/* title bar */
.titlebar { display: flex; height: 26px; align-items: flex-start; overflow: hidden; }
.quick { display: flex; align-items: center; width: 244px; height: 24px; flex: none; }
.quick button { width: 24px; }
.quick svg { width: 16px; height: 16px; }
.quick .logo { width: 16px; height: 18px; margin-left: 2px; }
.vsep { width: 1px; height: 12px; background: #777; margin: 0 7px 0 6px; }
.quick > .dd { margin: 0 2px; }
.quick .more { flex-direction: column; gap: 1px; width: 18px; }
.bar { width: 7px; height: 1px; background: #111; }
.more .dd { border-top-color: #111; }
.left { border: 6px solid transparent; border-right-color: #2f9be4; border-left: 0; margin-left: 4px; }
.menu { display: grid; grid-template-columns: 32px 32px 38px 42px 66px 49px 42px 52px 79px 56px 38px; flex: none; text-align: center; white-space: nowrap; color: #000; line-height: 24px; }
.menu .spot { position: relative; }
.spot::after { content: ""; position: absolute; left: 27px; top: -20px; width: 40px; height: 40px; border-radius: 50%; background: radial-gradient(#fff8c0a0, #f5dc60b0); }
.titlebar h1 { margin-left: auto; padding-right: 334px; line-height: 28px; color: #333; flex: none; }
.wbtns { display: flex; width: 72px; height: 24px; flex: none; }
.wbtns button { width: 23px; }
.wbtns svg { width: 12px; height: 12px; }

/* ribbon tabs */
.tabrow { display: flex; height: 22px; justify-content: space-between; }
.tabs { display: grid; grid-template-columns: 61px 52px 75px 77px 76px 73px 84px 82px 85px 99px 45px 43px 51px 67px 59px 71px 43px 51px; padding-left: 2px; text-align: center; white-space: nowrap; line-height: 21px; color: #444; }
.tabs .file { background: #2a63bd; border: 1px solid #1c4fa3; color: #fff; margin-right: 5px; line-height: 17px; height: 21px; margin-top: 1px; }
.tabs .on { background: #fdfdfd; border: 1px solid #b4bcc5; border-bottom: 0; margin-right: 1px; line-height: 19px; position: relative; z-index: 1; height: 23px; }
.tools { display: flex; align-items: center; padding-right: 3px; }
.tools svg { width: 16px; height: 16px; }
.fold { margin-right: 26px; }
.fold svg, .tools .sm svg { width: 12px; height: 12px; }
.gearb { margin-right: 18px; }
.tools .dd { margin: 0 5px 0 8px; }
.tools .sm { width: 17px; }

/* ribbon */
.ribbon { display: grid; grid-template-columns: 267px 343px 398px 297px 272px 64px 1fr; height: 94px; background: #fdfdfd; border: 1px solid #b4bcc5; }
.grp { position: relative; display: flex; flex-direction: column; justify-content: space-between; padding: 4px 0 3px; background: linear-gradient(#c6ccd3, #c6ccd3) right 0 bottom 0 / 1px 86px no-repeat; }
.grp h2 { text-align: center; color: #6b7280; }
.items { display: grid; align-items: start; }
.basic .items { grid-template-columns: 39px 38px 49px 55px 36px 37px; padding-left: 8px; }
.eng .items { grid-template-columns: 39px 56px 38px 33px 39px 38px 48px 39px; padding-left: 4px; }
.edit .items { grid-template-columns: 45px 45px 61px 37px 55px 53px 52px 35px; padding-left: 8px; }
.morph .items { grid-template-columns: 70px 80px 52px 82px; padding-left: 7px; }
.bedit .items { grid-template-columns: 68px 68px 36px 44px 42px; padding-left: 6px; }
.datum .items { grid-template-columns: 44px; padding-left: 11px; }
.cmd { flex-direction: column; justify-content: flex-start; height: 68px; border: 1px solid transparent; padding-top: 2px; white-space: nowrap; }
.cmd svg { width: 32px; height: 32px; margin-bottom: 2px; }
.cmd > .dd { margin-top: 7px; }
.hot { border-color: #f5cd56; background: linear-gradient(#fdf3c8 37px, #f5cd56 37px, #f5cd56 38px, #fdfdfd 38px); }
.row { display: flex; align-items: center; gap: 3px; }
.row .far { margin: 0 -22px 0 14px; }
.dn { font: bold 11px "Liberation Sans", sans-serif; fill: #c9141b; }

/* selection bar */
.optbar { display: flex; align-items: center; height: 31px; padding-left: 4px; }
.grip { width: 2px; height: 16px; margin-right: 6px; background: repeating-linear-gradient(#7b8490 0 2px, transparent 2px 4px); }
.tb { width: 24px; height: 22px; }
.tb svg { width: 16px; height: 16px; }
.tb.on { width: 23px; background: #fde27a; border: 1px solid #d3a32d; }
.hex { margin-left: 6px; }
.sep { width: 2px; height: 20px; background: #f8f8f8; border-left: 1px solid #bfc4ca; margin: 0 2px 0 3px; }
.sel { position: relative; display: flex; align-items: center; height: 21px; background: #e9e9e9; border: 1px solid #d6d9db; }
.sel select { appearance: none; border: 0; background: none; width: 100%; height: 100%; padding: 0 3px; font: inherit; color: #1a1a1a; opacity: 1; }
.sel select:disabled { color: #777; }
.sel::after { content: ""; position: absolute; right: 4px; top: 7px; border: 3px solid transparent; border-top-color: #aaa; border-bottom: 0; }
.white { width: 102px; background: #fff; border-color: #b9c0c8; margin: 0 2px 0 1px; }
.white::after { border-top-color: #333; }
.wide { width: 138px; margin-right: 1px; background: #e3e3e3; }
.greys { display: flex; gap: 8px; padding: 0 4px; }
.greys svg { width: 16px; height: 16px; }
.norm { width: 102px; background: #e9eaea; }

/* work area */
.work { display: flex; flex: 1; }
.side { width: 358px; flex: none; display: flex; flex-direction: column; }
.shead { display: flex; height: 19px; align-items: center; padding: 0 2px 2px 6px; color: #333; }
.shead span { margin-right: auto; }
.shead button { width: 20px; }
.shead svg { width: 12px; height: 12px; }
.sbody { display: flex; flex: 1; border: 1px solid #b4bcc5; border-bottom: 0; }
.rail { width: 30px; flex: none; display: flex; flex-direction: column; border-right: 1px solid #b4bcc5; }
.rail button { height: 48px; }
.rail button svg { width: 24px; height: 24px; }
.rail .on { background: #fdfdfd; height: 44px; margin: 0 -1px 1px 0; border-bottom: 1px solid #b4bcc5; }
.panel { flex: 1; background: #dbe0e8; border: solid #f6f7f8; border-width: 1px 2px 0; padding: 3px 3px 0; }
.acts { display: flex; gap: 4px; margin: -3px -3px 0; padding: 3px 2px 4px; background: #e3e5e7; }
.acts button { width: 30px; height: 26px; background: #fdfdfd; border: 1px solid #b4bcc5; }
.acts svg { width: 18px; height: 18px; }
.acts .info { margin-left: auto; background: #fde27a; border-color: #d3a32d; }
.info svg { width: 16px; height: 16px; }
.box { border: 1px solid #b4bcc5; margin-bottom: 2px; box-shadow: inset -1px -1px #f6f7f8; }
.box h3 { display: flex; align-items: center; gap: 5px; height: 23px; padding-left: 4px; font-weight: 700; color: #3b3f45; background: #fdfdfd; border-bottom: 1px solid #b4bcc5; }
.box h3 i { border: 5px solid transparent; border-top: 8px solid #55595f; border-bottom: 0; }
.fields { padding: 3px 8px 2px; }
.f { display: flex; align-items: center; height: 26px; }
.f label { width: 102px; flex: none; }
.f input { width: 135px; height: 22px; flex: none; border: 1px solid #b4bcc5; background: #fff; padding: 0 4px; font: inherit; color: #000; }
.plane input { width: 171px; }
.p16 { width: 16px; height: 16px; margin: 0 5px 0 4px; }
.green { fill: #4ed363; stroke: #2fa84a; }
.gold { fill: #f0c455; stroke: #b9a23a; }
.chev { width: 12px; height: 14px; margin: 0 6px; }
.ck { display: flex; align-items: center; gap: 5px; height: 22px; }
.ck input { appearance: none; width: 13px; height: 13px; margin: 0; border: 1px solid #85888c; background: #e9e9ea; display: grid; place-items: center; }
.ck input:checked::after { content: ""; width: 4px; height: 8px; border: solid #555; border-width: 0 2px 2px 0; transform: rotate(40deg); }

.main { flex: 1; min-width: 0; display: flex; flex-direction: column; padding: 0 2px 0 3px; }
.docs { display: flex; height: 24px; margin-top: -3px; border-bottom: 1px solid #b4bcc5; color: #000; }
.doc { display: flex; align-items: center; justify-content: center; gap: 6px; width: 147px; padding-top: 2px; margin-left: 22px; }
.docs svg { width: 12px; height: 12px; }
.doc.on { width: 115px; margin: 0 0 -1px 10px; padding: 0; background: #fdfdfd; border: 1px solid #b4bcc5; border-bottom: 0; }
.docs .add { width: 28px; }
.docs .list { width: 24px; margin-left: auto; }
.view { position: relative; flex: 1; background: #a0a0ff; overflow: hidden; }
.scene { position: absolute; inset: 0; width: 100%; height: 100%; }
.ax { font: 14px "Open Sans", sans-serif; }
.vbar { position: absolute; left: 50%; top: 3px; margin-left: -287px; display: flex; align-items: center; gap: 8px; height: 22px; }
.vbar svg { width: 18px; height: 18px; }
.vd { gap: 6px; }
.sw { border: 1px solid #000; background: #000; width: 16px; height: 8px; }
.sky { background: #c2e8fa; width: 17px; height: 17px; }
.layer { width: 121px; height: 22px; background: #ededf2; }
.vbar .layer svg { width: 28px; height: 16px; margin-left: 5px; }
.prompt { position: absolute; left: 14px; top: 25px; font: 13px/16px "Liberation Sans", sans-serif; color: #000; }
.scale { position: absolute; left: 5px; bottom: 2px; font-size: 15px; line-height: 18px; color: #111; }

.status { display: flex; align-items: center; height: 30px; border-top: 1px solid #b4bcc5; padding: 0 1px 1px 6px; }
.status span { flex: 1; }
.status .sep { border-color: #888; height: 24px; margin: 0 6px; }
.status .tb { margin-right: 6px; }
.status input { width: 350px; height: 22px; border: 1px solid #b4bcc5; background: #fff; }
```
